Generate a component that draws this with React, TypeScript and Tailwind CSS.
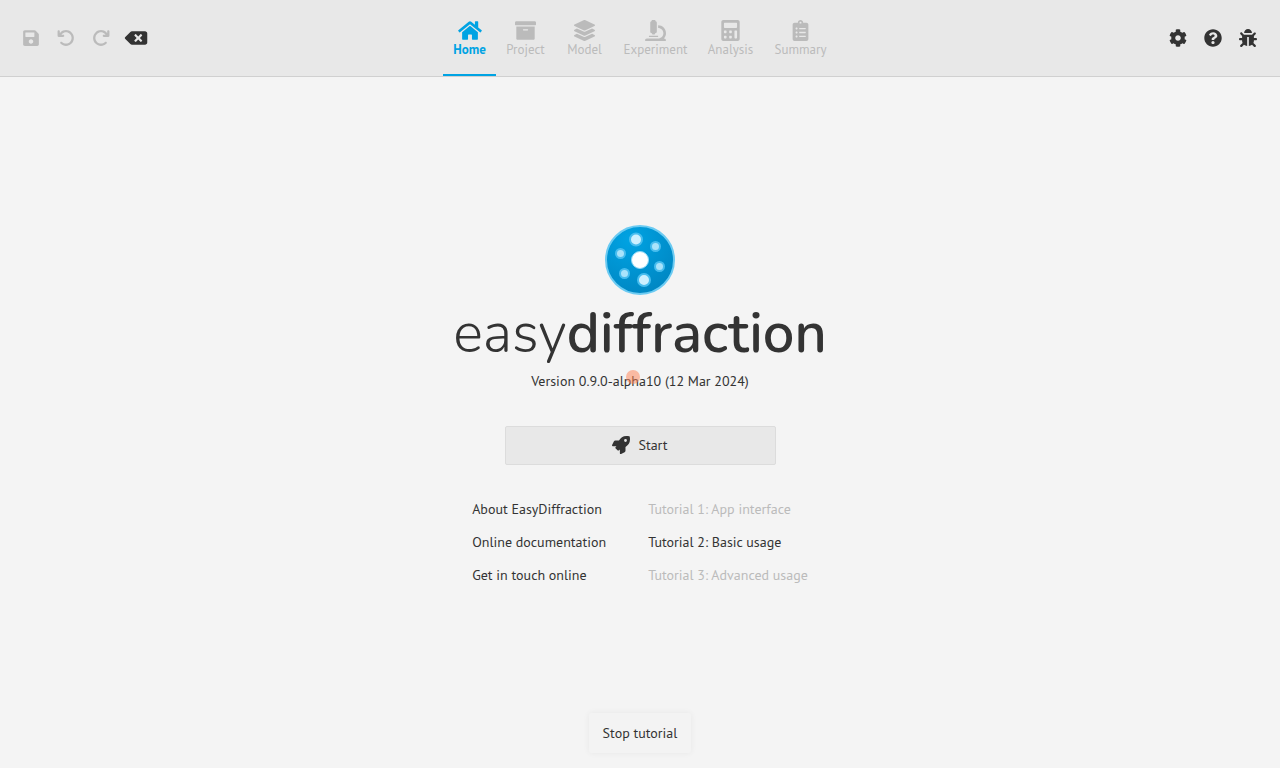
import type { ReactNode } from 'react';
import {
  FaSave,
  FaBackspace,
  FaHome,
  FaArchive,
  FaLayerGroup,
  FaMicroscope,
  FaCalculator,
  FaClipboardList,
  FaCog,
  FaQuestionCircle,
  FaBug,
  FaRocket,
} from 'react-icons/fa';
import { FaArrowRotateLeft, FaArrowRotateRight } from 'react-icons/fa6';

type ToolProps = { label: string; disabled?: boolean; children: ReactNode };

function ToolButton({ label, disabled, children }: ToolProps) {
  return (
    <button
      type="button"
      aria-label={label}
      disabled={disabled}
      className="flex h-9 w-[35px] items-center justify-center text-lg text-[#333] disabled:text-[#bbb]"
    >
      {children}
    </button>
  );
}

const tabs = [
  { label: 'Home', icon: <FaHome className="w-6" />, width: 'w-[53px]', active: true },
  { label: 'Project', icon: <FaArchive />, width: 'w-[59px]', active: false },
  { label: 'Model', icon: <FaLayerGroup />, width: 'w-[59px]', active: false },
  { label: 'Experiment', icon: <FaMicroscope />, width: 'w-[83px]', active: false },
  { label: 'Analysis', icon: <FaCalculator />, width: 'w-[67px]', active: false },
  { label: 'Summary', icon: <FaClipboardList />, width: 'w-[73px]', active: false },
];

function Logo() {
  return (
    <svg viewBox="0 0 70 70" className="size-[70px]" aria-hidden="true">
      <defs>
        <radialGradient id="disc" cx="0.35" cy="0.2" r="0.8">
          <stop offset="0" stopColor="#00a3e3" />
          <stop offset="1" stopColor="#0088c4" />
        </radialGradient>
      </defs>
      <circle cx="35" cy="35" r="34" fill="url(#disc)" stroke="#6ccbf2" strokeWidth="2" />
      <g stroke="#48bdee" strokeWidth="2">
        <circle cx="35" cy="35" r="8.500" fill="#fff" stroke="#8fd8f6" strokeWidth="1" />
        <circle cx="31" cy="14.500" r="6" fill="#cdf0ff" />
        <circle cx="39" cy="55" r="6" fill="#cdf0ff" />
        <circle cx="50.500" cy="21.500" r="4.500" fill="#a9e3fb" />
        <circle cx="15.500" cy="28.500" r="4.500" fill="#a9e3fb" />
        <circle cx="19.500" cy="48.500" r="4.500" fill="#a9e3fb" />
        <circle cx="54.500" cy="41.500" r="4.500" fill="#a9e3fb" />
      </g>
    </svg>
  );
}

export default function App() {
  return (
    <div className="flex min-h-screen flex-col bg-[#f4f4f4] font-['PT_Sans','Noto_Sans',sans-serif] text-sm leading-5 text-[#333]">
      <header className="flex h-[77px] items-center justify-between border-b border-[#d0d0d0] bg-[#e8e8e8] px-[13px]">
        <div className="flex flex-1">
          <ToolButton label="Save" disabled><FaSave /></ToolButton>
          <ToolButton label="Undo" disabled><FaArrowRotateLeft /></ToolButton>
          <ToolButton label="Redo" disabled><FaArrowRotateRight /></ToolButton>
          <ToolButton label="Reset"><FaBackspace className="w-6" /></ToolButton>
        </div>
        <nav className="flex h-full pl-0.5">
          {tabs.map((tab) => (
            <button
              key={tab.label}
              type="button"
              disabled={!tab.active}
              className={`flex h-full flex-col items-center border-b-2 pt-5 text-[13px] leading-[18px] ${tab.width} ${
                tab.active ? 'border-[#00a3e3] font-bold text-[#00a3e3]' : 'border-transparent text-[#bbb]'
              }`}
            >
              <span className="text-[21px]">{tab.icon}</span>
              <span>{tab.label}</span>
            </button>
          ))}
        </nav>
        <div className="flex flex-1 justify-end pr-0.5">
          <ToolButton label="Preferences"><FaCog /></ToolButton>
          <ToolButton label="Help"><FaQuestionCircle /></ToolButton>
          <ToolButton label="Report a bug"><FaBug /></ToolButton>
        </div>
      </header>

      <main className="flex flex-1 flex-col items-center pt-[148px]">
        <Logo />
        <h1 className="mt-[5px] font-['Nunito','Lato',sans-serif] text-[56px] leading-[68px] font-light">
          easy<span className="font-semibold">diffraction</span>
        </h1>
        <div className="relative mt-[3px]">
          <p>Version 0.9.0-alpha10 (12 Mar 2024)</p>
          <span className="absolute -top-px left-[95px] size-3.5 rounded-full bg-[#ff7f50]/50" />
        </div>
        <button
          type="button"
          className="mt-[35px] flex h-[39px] w-[271px] items-center justify-center gap-2 rounded-xs border border-[#dcdcdc] bg-[#e8e8e8] pb-px"
        >
          <FaRocket className="text-lg" />
          Start
        </button>
        <div className="mt-[34px] flex gap-[42px]">
          <div className="flex flex-col gap-[13px]">
            <a href="#about">About EasyDiffraction</a>
            <a href="#docs">Online documentation</a>
            <a href="#contact">Get in touch online</a>
          </div>
          <div className="flex flex-col gap-[13px]">
            <a href="#tutorial-1" aria-disabled="true" className="text-[#bbb]">Tutorial 1: App interface</a>
            <a href="#tutorial-2">Tutorial 2: Basic usage</a>
            <a href="#tutorial-3" aria-disabled="true" className="text-[#bbb]">Tutorial 3: Advanced usage</a>
          </div>
        </div>
        <button
          type="button"
          className="mt-auto mb-[15px] h-10 rounded-xs bg-[#f3f3f3] px-3.5 shadow-[0_0_6px_rgba(0,0,0,0.06)]"
        >
          Stop tutorial
        </button>
      </main>
    </div>
  );
}
